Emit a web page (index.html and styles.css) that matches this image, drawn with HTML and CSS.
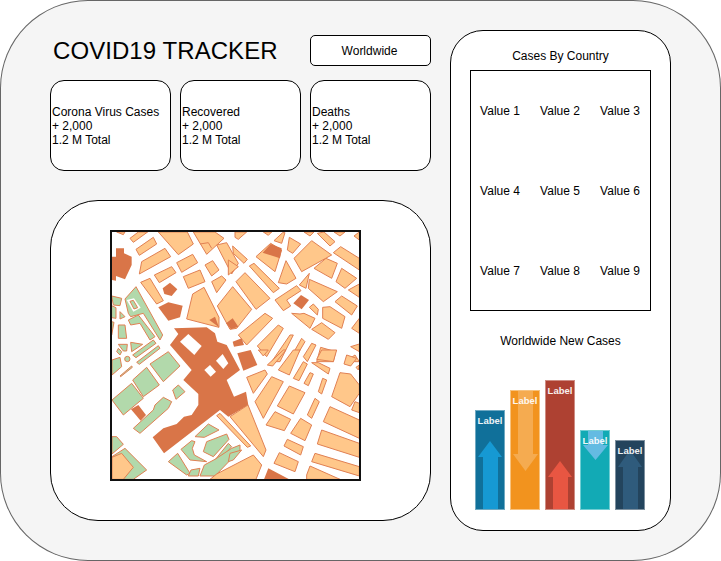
FILE: index.html
```html
<!DOCTYPE html>
<html lang="en">
<head>
<meta charset="utf-8">
<title>COVID19 Tracker</title>
<link rel="stylesheet" href="styles.css">
</head>
<body>
<div class="frame">
  <main class="main">
    <header class="top">
      <h1 class="title">COVID19 TRACKER</h1>
      <div class="select">Worldwide</div>
    </header>
    <section class="cards">
      <div class="card">Corona Virus Cases<br>+ 2,000<br>1.2 M Total</div>
      <div class="card">Recovered<br>+ 2,000<br>1.2 M Total</div>
      <div class="card">Deaths<br>+ 2,000<br>1.2 M Total</div>
    </section>
    <section class="mapcard">
      <div class="map">
        <svg class="mapsvg" width="247" height="247" viewBox="112 232 247 247">
          <g transform="translate(100 220) scale(.33333)">
            <g class="o">
              <polygon points="50,36 75,36 70,44"/>
              <polygon points="90,55 115,36 143,36 100,67"/>
              <polygon points="108,88 160,52 170,72 118,106"/>
              <polygon points="125,125 195,85 212,110 118,162"/>
              <polygon points="163,165 215,140 228,158 178,188"/>
              <polygon points="122,187 150,175 190,242 170,252"/>
              <polygon points="175,36 262,36 280,72 235,104"/>
              <polygon points="280,36 345,36 372,55 320,103"/>
              <polyline points="300,72 325,68 335,85"/>
              <polygon points="230,128 278,103 293,128 245,157"/>
              <polygon points="250,170 300,150 315,185 265,205"/>
              <polygon points="315,135 338,122 357,150 335,168"/>
              <polygon points="335,185 365,168 378,180 350,218"/>
              <polygon points="350,75 380,68 415,130 395,162"/>
              <polygon points="260,297 278,222 312,202 357,292 357,322"/>
              <polygon points="352,258 398,200 455,268 410,325 390,328"/>
            </g>
            <g class="d">
              <polygon points="328,300 345,290 357,322"/>
              <polygon points="378,310 398,295 415,320 393,328"/>
              <polygon points="36,110 48,110 48,85 72,85 72,100 95,110 95,135 75,178 48,168 48,182 36,180"/>
              <polygon points="188,205 210,188 232,208 215,228 193,222"/>
              <polygon points="175,262 205,247 248,257 240,292 205,302"/>
            </g>
          </g>
          <g transform="translate(110 285) scale(.33333)">
            <g class="g">
              <polygon points="5,33 35,40 30,62 10,60"/>
              <polygon points="45,42 78,5 158,150 150,165 100,85 62,95 55,85"/>
              <polygon points="55,105 85,90 135,155 120,165 90,115 62,120"/>
              <polygon points="5,62 18,68 18,100 5,98"/>
              <polygon points="30,80 45,95 30,102"/>
              <polygon points="25,120 45,120 50,160 25,160"/>
              <polygon points="5,110 12,112 5,150"/>
              <polygon points="25,178 52,178 50,198 40,198"/>
              <polygon points="62,172 98,178 65,200"/>
              <polygon points="68,210 130,165 138,175 78,218"/>
              <polygon points="80,232 145,182 150,190 88,238"/>
              <polygon points="25,190 35,200 30,210 20,200"/>
            </g>
            <polygon class="w" points="50,45 72,40 92,68 70,80"/>
            <polygon class="g-fill" points="60,49 70,46 83,68 72,72"/>
            <circle class="g-dot" cx="52" cy="222" r="8"/>
          </g>
          <g transform="translate(230 220) scale(.33333)">
            <g class="o">
              <polygon points="15,36 50,36 25,58 15,52"/>
              <polygon points="100,36 125,36 115,46"/>
              <polygon points="132,62 158,38 165,38 155,70"/>
              <polygon points="178,52 212,72 188,100 172,90"/>
              <polygon points="222,36 252,36 240,48"/>
              <polygon points="262,40 282,36 315,65 300,78"/>
              <polygon points="312,36 345,36 330,48"/>
              <polygon points="372,48 388,36 388,60"/>
              <polygon points="192,115 245,62 305,105 215,155"/>
              <polygon points="310,98 332,80 388,115 388,150"/>
              <polygon points="252,145 288,115 322,130 305,175"/>
              <polygon points="318,185 335,145 380,175 345,205"/>
              <polygon points="355,210 388,192 388,232"/>
              <polygon points="78,110 122,70 155,90 135,155"/>
              <polygon points="8,78 52,118 42,130 10,100"/>
              <polygon points="-5,120 25,140 -5,165"/>
              <polygon points="58,138 72,130 148,205 130,218"/>
              <polygon points="18,185 45,158 120,235 78,268"/>
              <polygon points="145,188 168,122 198,175 170,192"/>
              <polygon points="208,195 238,160 228,205"/>
              <polygon points="238,178 322,215 280,245 235,205"/>
              <polygon points="135,240 200,197 213,212 170,240 182,258 160,272"/>
              <polygon points="185,280 210,282 222,280 255,295 240,325"/>
              <polygon points="238,262 250,252 265,268 262,285"/>
              <polygon points="278,262 300,260 345,290 335,325 278,295"/>
              <polygon points="315,245 335,228 382,258 365,285"/>
              <polygon points="245,328 275,308 315,338 295,358"/>
              <polygon points="365,325 388,295 388,340"/>
              <polygon points="25,345 105,280 128,295 50,375"/>
              <polygon points="82,378 145,315 160,325 110,410"/>
              <polygon points="125,425 180,345 190,345 150,425"/>
              <polygon points="175,425 215,355 225,365 190,425"/>
              <polygon points="220,410 245,370 258,375 232,425"/>
              <polygon points="260,425 272,382 317,395 310,425"/>
              <polygon points="345,425 375,405 388,425"/>
              <polygon points="362,380 388,372 388,395"/>
            </g>
            <g class="d">
              <polygon points="98,98 122,72 155,85 150,115"/>
              <polygon points="190,250 213,225 237,240 215,268"/>
            </g>
          </g>
          <g transform="translate(100 350) scale(.33333)">
            <g class="g">
              <polygon points="36,150 95,100 130,145 70,195"/>
              <polygon points="98,90 140,52 178,105 130,140"/>
              <polygon points="150,42 205,5 240,48 190,95"/>
              <polygon points="218,120 235,105 255,125 228,148"/>
              <polygon points="100,235 160,180 165,165 190,142 215,155 205,175 120,250"/>
              <polygon points="36,260 50,260 70,283 36,312"/>
              <polygon points="75,295 140,360 100,388 36,388 36,320"/>
              <polygon points="60,78 95,48 97,52 62,80"/>
              <polygon points="36,30 60,22 65,50 36,75"/>
            </g>
            <g class="o">
              <polygon points="36,322 65,310 100,352 70,388 36,388"/>
            </g>
            <g class="d">
              <polygon points="93,178 115,165 138,195 122,212"/>
            </g>
          </g>
          <g transform="translate(165 410) scale(.33333)">
            <g class="g">
              <polygon points="90,80 130,42 162,60 118,82"/>
              <polygon points="115,125 125,95 185,72 192,88 145,140"/>
              <polygon points="150,150 190,100 200,110 160,155"/>
              <polygon points="48,118 80,92 90,95 82,115 88,135 125,155 75,150"/>
              <polygon points="10,155 38,130 75,190 65,195"/>
              <polygon points="78,180 105,175 100,198 70,198"/>
              <polygon points="105,198 118,165 150,148 200,115 225,105 225,120 150,198"/>
            </g>
          </g>
          <g transform="translate(160 320) scale(.33333)">
            <g class="d">
              <polygon points="42,25 140,22 165,40 172,65 200,75 240,150 200,180 222,230 258,215 265,255 205,290 180,270 12,400 -22,352 10,325 50,312 72,290 95,285 115,255 115,222 70,180 95,150 30,75 55,42"/>
              <polygon points="232,100 272,90 292,135 250,152"/>
              <polygon points="218,65 245,55 252,75 222,80"/>
            </g>
            <polygon class="w" points="60,65 85,42 125,78 103,105"/>
            <polygon class="w" points="133,150 150,135 168,155 152,170"/>
            <polygon class="w" points="168,122 188,102 205,130 190,147"/>
          </g>
          <g transform="translate(230 350) scale(.33333)">
            <g class="o">
              <polygon points="85,0 115,0 100,18"/>
              <polygon points="112,45 160,0 168,0 128,48"/>
              <polygon points="145,60 190,0 210,0 178,75"/>
              <polygon points="190,85 220,35 232,42 207,92"/>
              <polygon points="222,100 240,68 250,72 235,107"/>
              <polygon points="245,38 265,38 300,55 295,72"/>
              <polygon points="260,28 275,0 320,0 310,35"/>
              <polygon points="342,42 350,15 380,25 362,48"/>
              <polygon points="378,52 388,45 385,60"/>
              <polygon points="265,125 278,85 290,90 275,132"/>
              <polygon points="305,140 330,68 362,72 388,105 388,130 360,170"/>
              <polygon points="365,180 375,155 388,160 388,188"/>
              <polygon points="50,82 105,60 112,72 70,130"/>
              <polygon points="75,155 125,80 160,95 100,205"/>
              <polygon points="142,168 178,108 225,128 190,192"/>
              <polygon points="108,225 135,185 182,208 163,242"/>
              <polygon points="232,195 255,145 268,155 245,205"/>
              <polygon points="182,250 212,205 245,225 225,272"/>
              <polygon points="280,215 300,170 388,210 388,265"/>
              <polygon points="262,282 275,240 388,280 388,322"/>
              <polygon points="245,335 255,310 388,350 388,378"/>
              <polygon points="230,375 240,348 330,388 230,388"/>
              <polygon points="162,288 172,268 220,290 212,315"/>
              <polygon points="132,340 148,308 205,335 195,365"/>
              <polygon points="0,200 54,165 108,300 100,320"/>
              <polygon points="-40,197 -30,190 62,288 52,292"/>
              <polygon points="-40,372 70,315 95,345 78,388 -60,388"/>
            </g>
            <g class="g">
              <polygon points="0,310 35,300 10,330 -5,335"/>
            </g>
            <g class="d">
              <polygon points="102,388 115,355 178,388"/>
            </g>
          </g>
        </svg>
      </div>
    </section>
  </main>
  <aside class="panel">
    <h2 class="heading">Cases By Country</h2>
    <div class="values">
      <span>Value 1</span><span>Value 2</span><span>Value 3</span>
      <span>Value 4</span><span>Value 5</span><span>Value 6</span>
      <span>Value 7</span><span>Value 8</span><span>Value 9</span>
    </div>
    <h2 class="heading heading-new">Worldwide New Cases</h2>
    <div class="bars">
      <div class="bar bar-a">
        <svg class="arrow" width="28" height="98" viewBox="476 411 28 98"><polygon class="arrow-a" points="490,441 502,457 498,457 498,509 483,509 483,457 478,457"/></svg>
        <span class="label">Label</span>
      </div>
      <div class="bar bar-b">
        <svg class="arrow" width="28" height="118" viewBox="511 391 28 118"><polygon class="arrow-b" points="518,391 533,391 533,454 538,454 525.500,471 513,454 518,454"/></svg>
        <span class="label">Label</span>
      </div>
      <div class="bar bar-c">
        <svg class="arrow" width="28" height="128" viewBox="546 381 28 128"><polygon class="arrow-c" points="560,461 572,477 568,477 568,509 553,509 553,477 548,477"/></svg>
        <span class="label">Label</span>
      </div>
      <div class="bar bar-d">
        <svg class="arrow" width="28" height="78" viewBox="581 431 28 78"><polygon class="arrow-d" points="588,431 603,431 603,445 608,445 595.500,460 583,445 588,445"/></svg>
        <span class="label">Label</span>
      </div>
      <div class="bar bar-e">
        <svg class="arrow" width="28" height="68" viewBox="616 441 28 68"><polygon class="arrow-e" points="630,450 642,467 638,467 638,509 623,509 623,467 618,467"/></svg>
        <span class="label">Label</span>
      </div>
    </div>
  </aside>
</div>
</body>
</html>
```

FILE: styles.css
```css
* { box-sizing: border-box; }
html, body { margin: 0; padding: 0; }
body {
  width: 721px;
  height: 561px;
  overflow: hidden;
  font-family: "Liberation Sans", Arial, sans-serif;
  font-size: 12px;
  line-height: 14px;
  color: #000;
}
.frame {
  width: 721px;
  height: 561px;
  display: flex;
  gap: 19px;
  padding: 30px 0 0 50px;
  background: #f5f5f5;
  border-radius: 88px;
  box-shadow: inset 0 0 0 1px #666;
}
.main { width: 381px; padding-top: 5px; }
.top { display: flex; justify-content: space-between; align-items: center; height: 31px; }
.title { margin: 0 0 0 3px; font-size: 24px; line-height: 30px; font-weight: 400; letter-spacing: .07px; }
.select {
  width: 121px;
  height: 31px;
  padding-right: 2px;
  display: flex;
  align-items: center;
  justify-content: center;
  background: #fff;
  border: 1px solid #000;
  border-radius: 5px;
}
.cards { display: flex; gap: 9px; margin-top: 14px; }
.card {
  width: 121px;
  height: 91px;
  padding-left: 1px;
  display: flex;
  align-items: center;
  background: #fff;
  border: 1px solid #000;
  border-radius: 14px;
}
.mapcard {
  width: 381px;
  height: 321px;
  margin-top: 29px;
  display: flex;
  padding: 29px 0 0 59px;
  background: #fff;
  border: 1px solid #000;
  border-radius: 48px;
}
.map { width: 251px; height: 251px; border: 2px solid #111; background: #fff; }
.mapsvg { display: block; }
.o polygon { fill: #ffc78a; stroke: #e08052; stroke-width: 3; stroke-linejoin: round; }
.o polyline { fill: none; stroke: #e08052; stroke-width: 3; }
.g polygon { fill: #b2d9ab; stroke: #e08052; stroke-width: 3; stroke-linejoin: round; }
.g-fill { fill: #b2d9ab; stroke: #e08052; stroke-width: 3; }
.g-dot { fill: #b2d9ab; stroke: #e08052; stroke-width: 3; }
.d polygon { fill: #d97548; }
.w { fill: #fff; }
.panel {
  width: 221px;
  height: 501px;
  padding: 18px 19px 0;
  background: #fff;
  border: 1px solid #000;
  border-radius: 33px;
}
.heading { margin: 0; font-size: 12px; line-height: 14px; font-weight: 400; text-align: center; }
.values {
  width: 181px;
  height: 241px;
  margin-top: 7px;
  display: grid;
  grid-template-columns: 60px 60px 60px;
  grid-template-rows: 80px 80px 80px;
  align-items: center;
  justify-items: center;
  border: 1px solid #000;
}
.values span { padding-right: 2px; }
.heading-new { margin-top: 23px; }
.bars { display: flex; align-items: flex-end; gap: 5px; height: 131px; margin: 31px 0 0 5px; }
.bar { position: relative; width: 30px; border: 1px solid; }
.arrow { position: absolute; left: 0; top: 0; display: block; }
.label {
  position: relative;
  display: block;
  margin-top: 4px;
  font-size: 9.500px;
  line-height: 12px;
  font-weight: 700;
  color: #fff;
  text-align: center;
  opacity: .92;
}
.bar-a { height: 100px; background: #10709a; border-color: #6fa9c2; }
.bar-b { height: 120px; background: #f2931e; border-color: #f7c27e; }
.bar-c { height: 130px; background: #ae4132; border-color: #ce8d84; }
.bar-d { height: 80px; background: #12aab5; border-color: #71cdd3; }
.bar-e { height: 70px; background: #23445d; border-color: #7c8f9e; }
.arrow-a { fill: #1699d3; }
.arrow-b { fill: #f5ab50; }
.arrow-c { fill: #e85642; }
.arrow-d { fill: #64bbe2; }
.arrow-e { fill: #2f5b7c; }
```
